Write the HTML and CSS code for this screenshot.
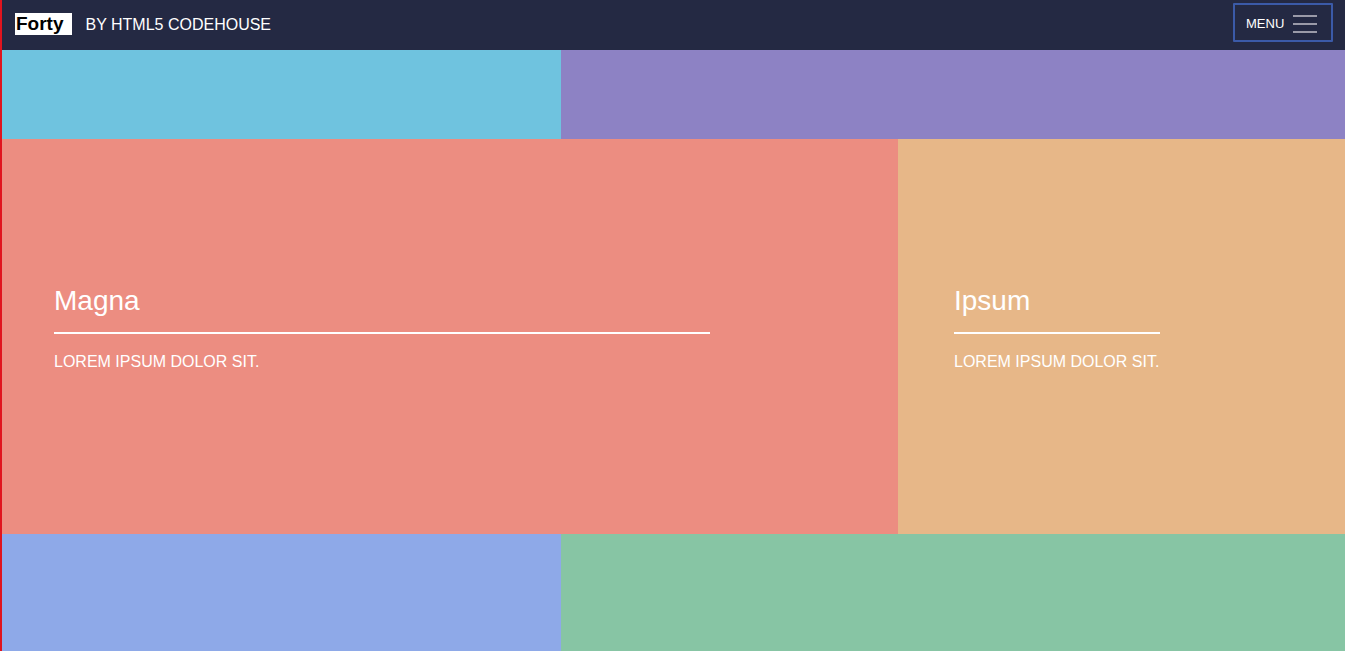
FILE: index.html
```html
<!DOCTYPE html>
<html lang="en">
<head>
<meta charset="utf-8">
<title>Forty by HTML5 Codehouse</title>
<link rel="stylesheet" href="styles.css">
</head>
<body>
<div class="page">
  <header class="header">
    <div class="brand">
      <span class="logo">Forty</span>
      <span class="by">BY HTML5 CODEHOUSE</span>
    </div>
    <button class="menu-btn" type="button">
      <span class="menu-label">MENU</span>
      <svg class="burger" width="24" height="18" viewBox="0 0 24 18" aria-hidden="true">
        <rect x="0" y="0" width="24" height="2" fill="#9a9aa8"/>
        <rect x="0" y="8" width="24" height="2" fill="#9a9aa8"/>
        <rect x="0" y="16" width="24" height="2" fill="#9a9aa8"/>
      </svg>
    </button>
  </header>
  <main class="tiles">
    <div class="row row-top">
      <div class="tile tile-a blue"></div>
      <div class="tile tile-b purple"></div>
    </div>
    <div class="row row-mid">
      <div class="tile tile-wide salmon">
        <div class="content content-magna">
          <h2 class="title">Magna</h2>
          <div class="rule rule-magna"></div>
          <p class="sub">LOREM IPSUM DOLOR SIT.</p>
        </div>
      </div>
      <div class="tile tile-narrow orange">
        <div class="content content-ipsum">
          <h2 class="title">Ipsum</h2>
          <div class="rule rule-ipsum"></div>
          <p class="sub">LOREM IPSUM DOLOR SIT.</p>
        </div>
      </div>
    </div>
    <div class="row row-bottom">
      <div class="tile tile-a lightblue"></div>
      <div class="tile tile-b green"></div>
    </div>
  </main>
</div>
</body>
</html>
```
FILE: styles.css
```css
html, body {
  margin: 0;
  padding: 0;
  height: 651px;
  overflow: hidden;
}
body {
  font-family: "Liberation Sans", Arial, sans-serif;
  color: #ffffff;
  background: #242943;
}
.page {
  border-left: 2px solid #e0141e;
  height: 651px;
  display: flex;
  flex-direction: column;
}
.header {
  height: 50px;
  flex: none;
  background: #242943;
  display: flex;
  justify-content: space-between;
  align-items: flex-start;
  padding-right: 12px;
}
.brand {
  display: flex;
  align-items: center;
  height: 47px;
  padding-left: 13px;
}
.logo {
  background: #ffffff;
  color: #000000;
  font-weight: bold;
  font-size: 19px;
  line-height: 22px;
  height: 22px;
  padding: 0 8px 0 1px;
  margin-right: 14px;
}
.by {
  font-size: 16px;
  line-height: 20px;
  color: #ffffff;
  padding-top: 2px;
}
.menu-btn {
  margin-top: 3px;
  width: 100px;
  height: 39px;
  box-sizing: border-box;
  border: 2px solid #3b5aa8;
  border-radius: 1px;
  background: transparent;
  color: #ffffff;
  display: flex;
  align-items: center;
  padding: 0 14px 0 11px;
  font-family: "Liberation Sans", Arial, sans-serif;
  cursor: pointer;
}
.menu-label {
  font-size: 13px;
  line-height: 15px;
  flex: 1;
  text-align: left;
  padding-top: 1px;
}
.burger {
  display: block;
  margin-top: 2px;
}
.tiles {
  flex: 1;
  display: flex;
  flex-direction: column;
}
.row {
  display: flex;
}
.row-top { height: 89px; }
.row-mid { height: 395px; }
.row-bottom { flex: 1; }
.tile-a { width: 559px; flex: none; }
.tile-b { flex: 1; }
.tile-wide { width: 896px; flex: none; }
.tile-narrow { flex: 1; }
.blue { background: #6fc3df; }
.purple { background: #8d82c4; }
.salmon { background: #ec8d81; }
.orange { background: #e7b788; }
.lightblue { background: #8ea9e8; }
.green { background: #87c5a4; }
.content {
  padding-top: 145px;
}
.content-magna { padding-left: 52px; }
.content-ipsum { padding-left: 56px; }
.title {
  margin: 0;
  font-size: 28px;
  line-height: 34px;
  font-weight: normal;
}
.rule {
  height: 2px;
  background: #ffffff;
  margin-top: 14px;
}
.rule-magna { width: 656px; }
.rule-ipsum { width: 206px; }
.sub {
  margin: 18px 0 0;
  font-size: 16px;
  line-height: 19px;
}
```
